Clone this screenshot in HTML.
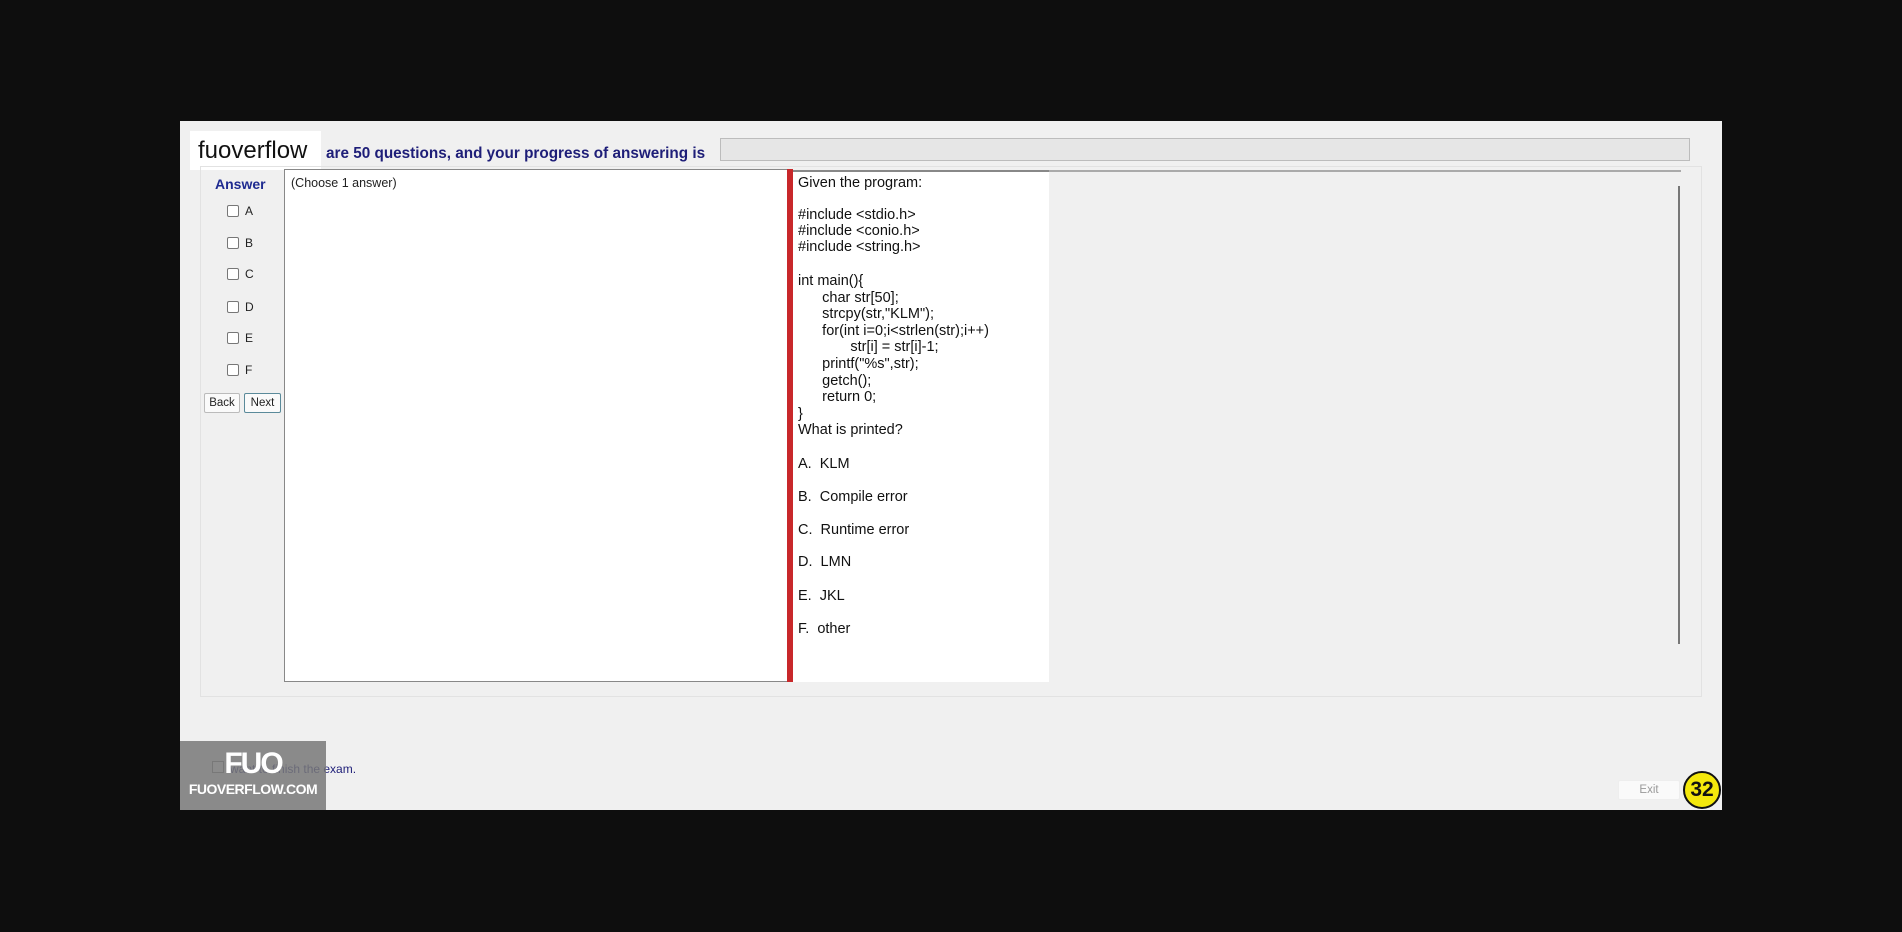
<!DOCTYPE html>
<html><head><meta charset="utf-8"><style>
*{margin:0;padding:0;box-sizing:border-box}
body{width:1902px;height:932px;background:#0e0e0e;position:relative;overflow:hidden;font-family:"Liberation Sans",Arial,sans-serif}
.a{position:absolute}
#app{left:180px;top:121px;width:1542px;height:689px;background:#f0f0f0}
.cb{position:absolute;width:12px;height:12px;border:1px solid #777;background:#fff;border-radius:2px}
.lbl{position:absolute;font-size:12px;color:#222}
.q{position:absolute;left:798px;font-size:14.5px;color:#111;white-space:pre;line-height:16px}
.btn{position:absolute;height:20px;border:1px solid #bbb;background:#fafafa;font-size:11.5px;text-align:center;line-height:18px;color:#222;border-radius:2px}
</style></head><body>
<div class="a" id="app"></div>
<div class="a" style="left:190px;top:131px;width:131px;height:39px;background:#fff;font-size:24px;line-height:40px;padding-left:8px;color:#111">fuoverflow</div>
<div class="a" style="left:326px;top:145px;font-size:15.3px;font-weight:bold;color:#1e1e78">are 50 questions, and your progress of answering is</div>
<div class="a" style="left:720px;top:138px;width:970px;height:23px;border:1px solid #bcbcbc;background:#e6e6e6"></div>
<div class="a" style="left:200px;top:166px;width:1502px;height:531px;border:1px solid #e2e2e2"></div>
<div class="a" style="left:284px;top:169px;width:504px;height:513px;background:#fff;border:1px solid #888;border-right:none"></div>
<div class="a" style="left:291px;top:176px;font-size:12.5px;color:#222">(Choose 1 answer)</div>
<div class="a" style="left:787px;top:169px;width:6px;height:513px;background:#c8282a"></div>
<div class="a" style="left:793px;top:170px;width:256px;height:512px;background:#fff;border-top:2px solid #888"></div>
<div class="a" style="left:1049px;top:170px;width:632px;height:2px;background:#aaa"></div>
<div class="a" style="left:1678px;top:186px;width:2px;height:458px;background:#777"></div>
<div class="a" style="left:215px;top:176px;font-size:14px;font-weight:bold;color:#1e2a90">Answer</div>
<div class="cb" style="left:227px;top:205px"></div><div class="lbl" style="left:245px;top:204px">A</div>
<div class="cb" style="left:227px;top:237px"></div><div class="lbl" style="left:245px;top:236px">B</div>
<div class="cb" style="left:227px;top:268px"></div><div class="lbl" style="left:245px;top:267px">C</div>
<div class="cb" style="left:227px;top:301px"></div><div class="lbl" style="left:245px;top:300px">D</div>
<div class="cb" style="left:227px;top:332px"></div><div class="lbl" style="left:245px;top:331px">E</div>
<div class="cb" style="left:227px;top:364px"></div><div class="lbl" style="left:245px;top:363px">F</div>
<div class="btn" style="left:204px;top:393px;width:36px">Back</div>
<div class="btn" style="left:244px;top:393px;width:37px;border-color:#5a8a9a">Next</div>
<div class="q" style="top:175px">Given the program:</div>
<div class="q" style="top:207px">#include &lt;stdio.h&gt;
#include &lt;conio.h&gt;
#include &lt;string.h&gt;</div>
<div class="q" style="top:273px;line-height:16.6px">int main(){
      char str[50];
      strcpy(str,"KLM");
      for(int i=0;i&lt;strlen(str);i++)
             str[i] = str[i]-1;
      printf("%s",str);
      getch();
      return 0;
}
What is printed?</div>
<div class="q" style="top:456px">A.  KLM</div>
<div class="q" style="top:489px">B.  Compile error</div>
<div class="q" style="top:522px">C.  Runtime error</div>
<div class="q" style="top:554px">D.  LMN</div>
<div class="q" style="top:588px">E.  JKL</div>
<div class="q" style="top:621px">F.  other</div>
<div class="a" style="left:212px;top:761px;width:12px;height:12px;border:1px solid #777;background:#fff"></div>
<div class="a" style="left:230px;top:762px;font-size:12px;color:#1e1e78">want to finish the exam.</div>
<div class="a" style="left:180px;top:741px;width:146px;height:69px;background:rgba(120,120,120,.85);color:#fff;text-align:center">
<div style="font-size:30px;font-weight:bold;line-height:34px;margin-top:6px;letter-spacing:-2px">FUO</div>
<div style="font-size:14px;font-weight:bold;line-height:16px;letter-spacing:-.5px">FUOVERFLOW.COM</div></div>
<div class="btn" style="left:1618px;top:780px;width:62px;color:#999;border-color:#eee">Exit</div>
<div class="a" style="left:1683px;top:771px;width:38px;height:38px;border-radius:50%;background:#f4e80c;border:2px solid #111;font-size:21px;font-weight:bold;text-align:center;line-height:34px;color:#111">32</div>
</body></html>
